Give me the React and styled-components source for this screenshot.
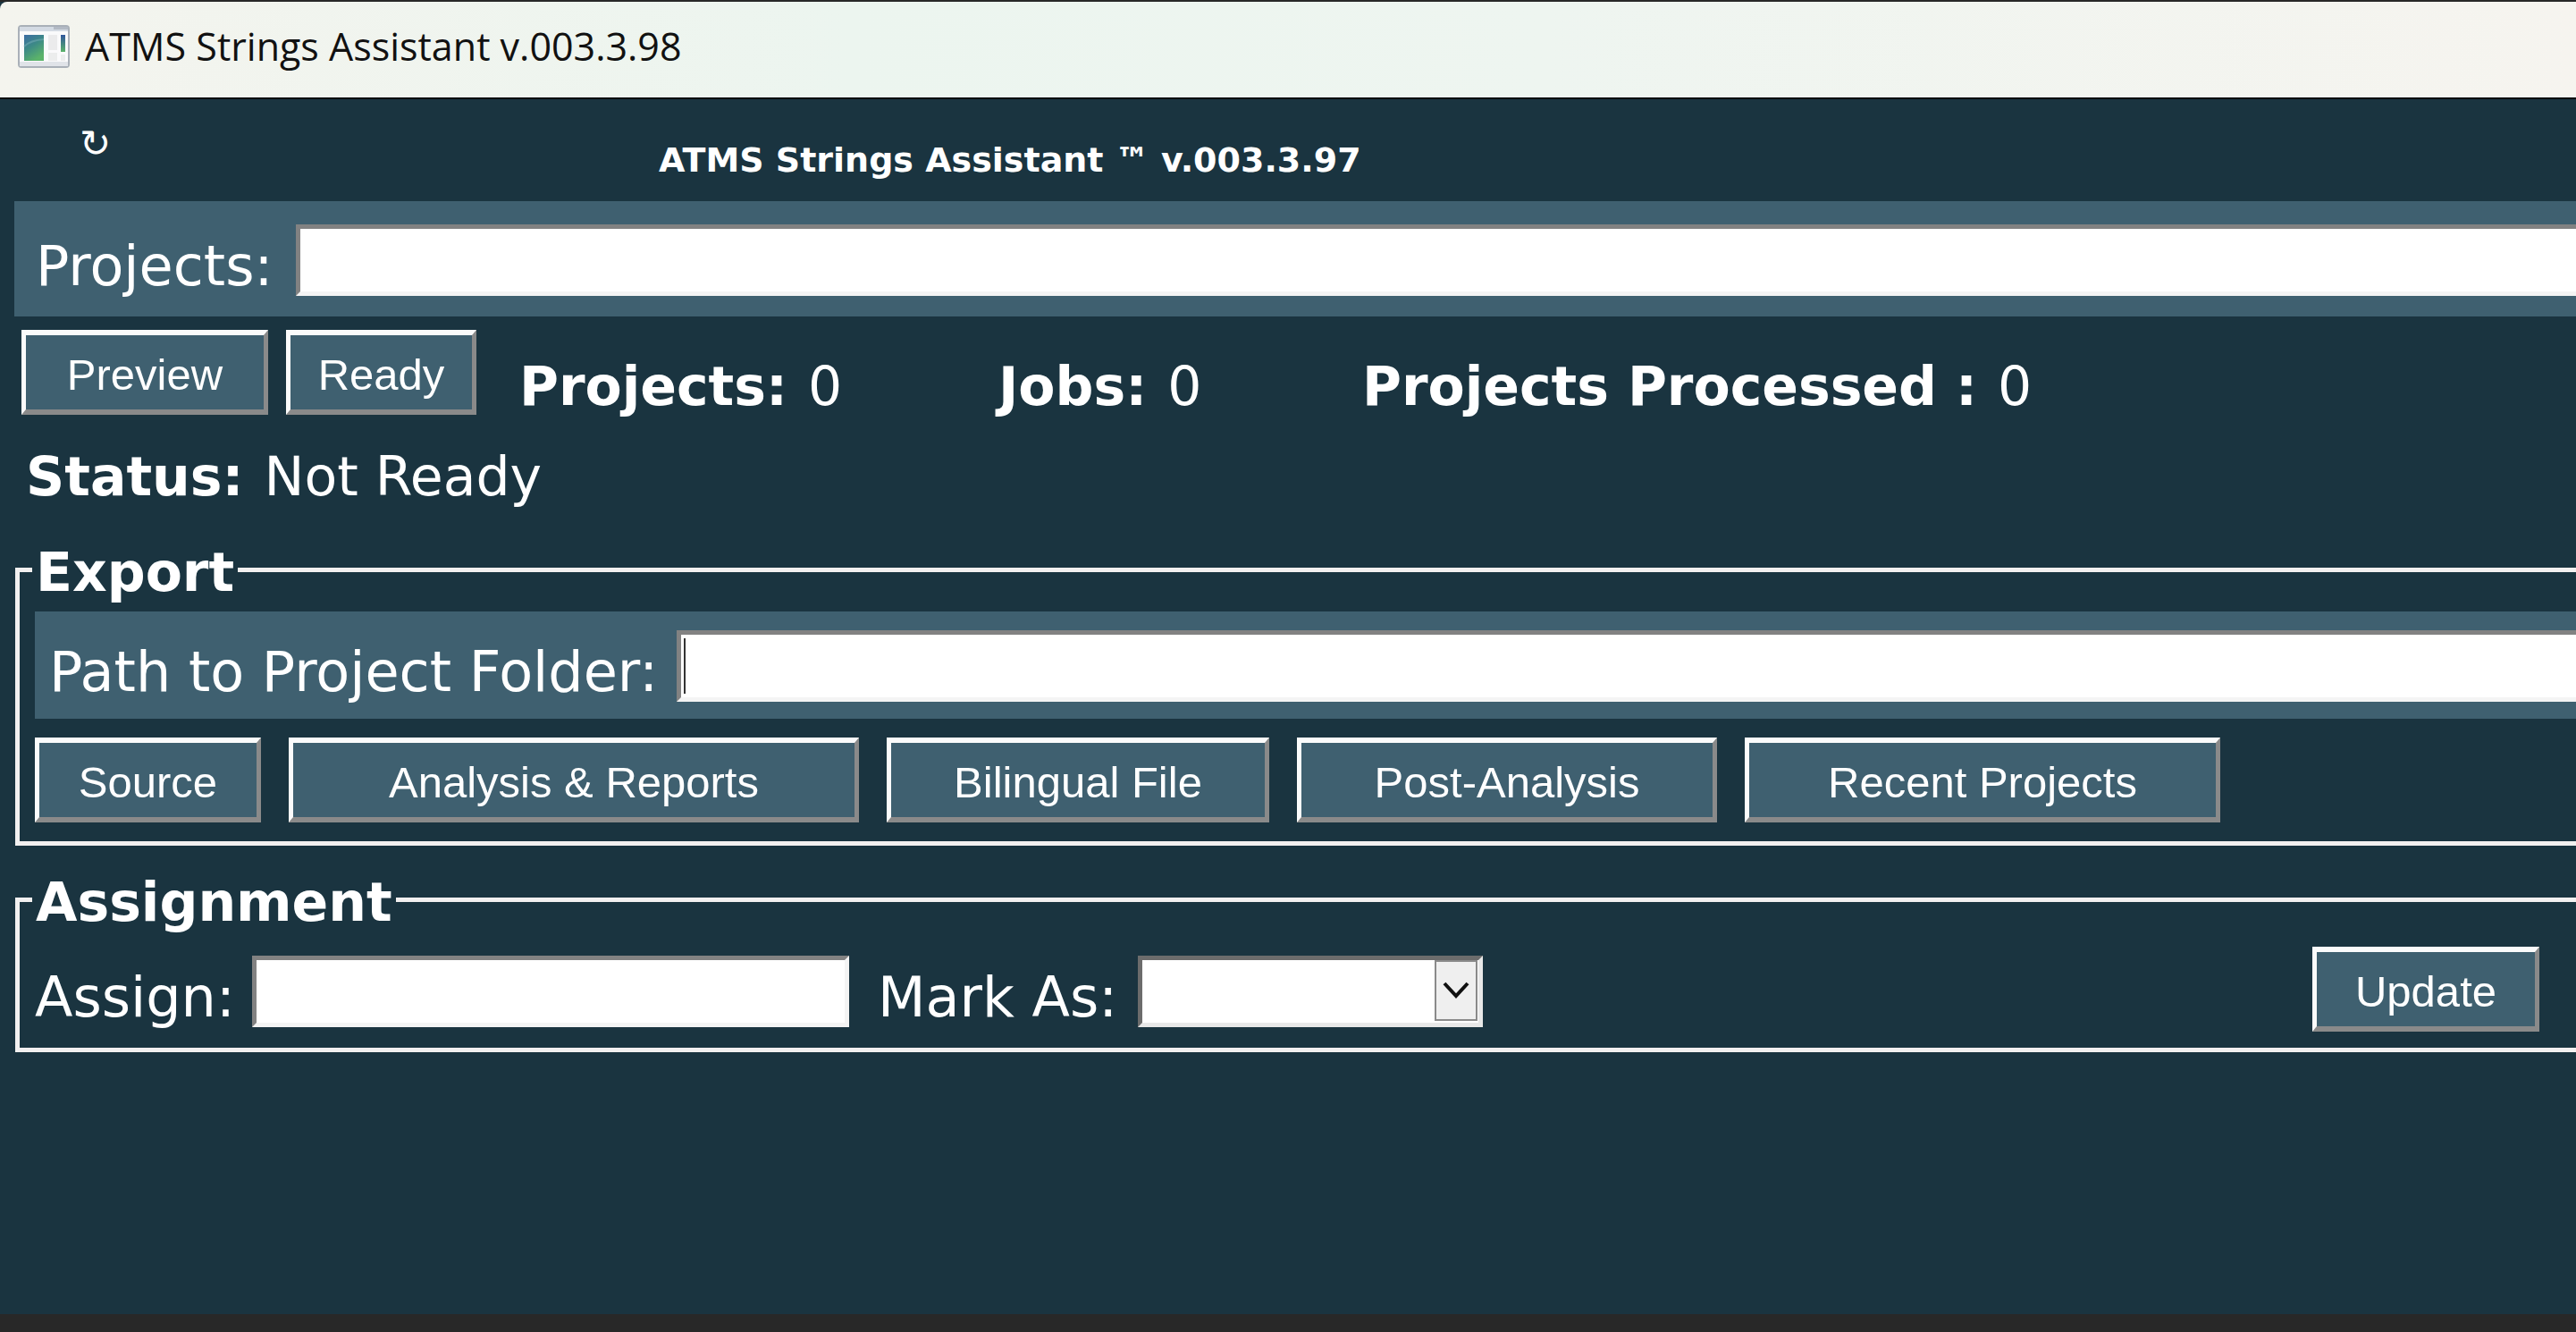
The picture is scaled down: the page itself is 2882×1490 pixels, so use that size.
import React from "react";
import styled, { createGlobalStyle } from "styled-components";

const ui = '"DejaVu Sans", Verdana, sans-serif';
const buttonFont = '"Liberation Sans", Arial, sans-serif';
const ink = "#1a3440";
const slate = "#3f6070";

const GlobalStyle = createGlobalStyle`
  *, *::before, *::after { box-sizing: border-box; }
  body { margin: 0; background: #282828; }
`;

const Window = styled.div`
  display: flex;
  flex-direction: column;
  min-height: 100vh;
  overflow: hidden;
  border-top: 2px solid #282828;
  border-bottom: 20px solid #282828;
  background: ${ink};
  color: #fff;
  font-family: ${ui};
  font-size: 60px;
`;

const TitleBar = styled.header`
  display: flex;
  align-items: center;
  gap: 17px;
  height: 109px;
  padding: 0 20px 8px;
  border-bottom: 2px solid #05080c;
  border-top-left-radius: 8px;
  background: linear-gradient(90deg, #f4f4ee 0%, #ecf5ef 33%, #eef5f0 60%, #f6f4ef 100%);
  color: #111;
  font-family: "Open Sans", "Noto Sans", sans-serif;
  font-size: 43px;
  line-height: 60px;
`;

const Main = styled.main`
  display: flex;
  flex-direction: column;
  padding-left: 16px;
`;

const Banner = styled.div`
  display: flex;
  align-items: flex-start;
  height: 114px;
`;

const RefreshButton = styled.button`
  width: 181px;
  margin-top: 26px;
  padding: 0;
  border: 0;
  background: none;
  color: #fff;
  font-family: ${ui};
  font-size: 42px;
  line-height: 48px;
`;

const Heading = styled.h1`
  margin: 0;
  padding: 44px 0 0 540px;
  font-size: 38px;
  line-height: 48px;
  white-space: nowrap;
`;

const Panel = styled.div`
  display: flex;
  align-items: flex-start;
  height: ${(p) => p.$height}px;
  padding-top: ${(p) => p.$pad}px;
  background: ${slate};
`;

const Label = styled.label`
  width: ${(p) => p.$width}px;
  padding-left: ${(p) => p.$inset || 0}px;
  font-size: 62px;
  line-height: 94px;
  white-space: nowrap;
`;

const TextBox = styled.input`
  flex: ${(p) => (p.$width ? "none" : "1")};
  width: ${(p) => (p.$width ? p.$width + "px" : "auto")};
  min-width: 0;
  height: 80px;
  padding: 0 8px;
  border: 5px solid;
  border-color: #828282 #f4f4f4 #f4f4f4 #828282;
  border-right-width: ${(p) => (p.$width ? 5 : 0)}px;
  outline: 0;
  background: ${(p) =>
    p.$caret ? "linear-gradient(#333, #333) 3px 4px / 2px 62px no-repeat #fff" : "#fff"};
  caret-color: ${(p) => (p.$caret ? "transparent" : "auto")};
  color: #111;
  font: 50px ${ui};
`;

const SelectWrap = styled.div`
  position: relative;
  width: 386px;
  height: 80px;
`;

const Select = styled.select`
  appearance: none;
  width: 100%;
  height: 100%;
  border: 5px solid;
  border-color: #6c6c6c #e8e8e8 #e8e8e8 #6c6c6c;
  border-radius: 0;
  background: #fff;
  font: 50px ${ui};
`;

const Arrow = styled.span`
  position: absolute;
  top: 5px;
  right: 6px;
  bottom: 7px;
  width: 48px;
  display: flex;
  align-items: center;
  justify-content: center;
  border: 2px solid #8a8a8a;
  background: #efefef;
  pointer-events: none;
`;

const Button = styled.button`
  flex: none;
  width: ${(p) => p.$width}px;
  height: 95px;
  padding: 4px 0 0;
  border: 6px solid;
  border-color: #fbfbfb #8a8a8a #8a8a8a #fbfbfb;
  border-left-width: 5px;
  border-right-width: 5px;
  background: ${slate};
  color: #fff;
  font-family: ${buttonFont};
  font-size: 49px;
  line-height: 60px;
  white-space: nowrap;
`;

const Row = styled.div`
  display: flex;
  align-items: flex-start;
  gap: ${(p) => p.$gap || 0}px;
  padding: ${(p) => p.$padding || 0};
`;

const Stat = styled.div`
  width: ${(p) => p.$width}px;
  padding-top: 27px;
  line-height: 72px;
  white-space: nowrap;
`;

const Status = styled.p`
  margin: 29px 0 32px;
  padding-left: 13px;
  line-height: 72px;
`;

const Value = styled.span`
  padding-left: 4px;
`;

const Group = styled.fieldset`
  min-width: 0;
  margin: 0 0 24px 1px;
  padding: ${(p) => p.$padding};
  border: 5px solid #f2f0f0;
  border-right: 0;
`;

const Legend = styled.legend`
  margin-left: -3px;
  padding: 6px 4px 0;
  font-weight: 700;
  line-height: 66px;
`;

const Fields = styled.div`
  display: flex;
  flex: 1;
  align-items: flex-start;
  padding-top: 10px;
`;

function AppIcon() {
  return (
    <svg width="58" height="48" viewBox="0 0 58 48" aria-hidden="true">
      <defs>
        <linearGradient id="pane" x1="0" y1="0" x2="0.5" y2="1">
          <stop offset="0" stopColor="#3b6ba3" />
          <stop offset="0.5" stopColor="#3d8a86" />
          <stop offset="1" stopColor="#5bb36a" />
        </linearGradient>
        <linearGradient id="bar" x1="0" y1="0" x2="0" y2="1">
          <stop offset="0" stopColor="#2f559b" />
          <stop offset="1" stopColor="#5bb36a" />
        </linearGradient>
      </defs>
      <rect x="1" y="1" width="56" height="46" rx="3" fill="#fafafb" stroke="#a9b0b8" strokeWidth="2" />
      <rect x="2" y="2" width="54" height="5" fill="#d3dae3" />
      <rect x="40" y="2" width="16" height="3" fill="#b3bac4" />
      <rect x="2" y="41" width="54" height="5" fill="#e0e3e8" />
      <rect x="7" y="11" width="22" height="29" fill="url(#pane)" />
      <path d="M7 24 Q14 17 29 16" stroke="#6fa9b0" strokeWidth="2" fill="none" opacity="0.6" />
      <rect x="34" y="11" width="10" height="17" fill="#ebebec" />
      <rect x="34" y="31" width="10" height="9" fill="#eceded" />
      <rect x="48" y="11" width="5" height="19" fill="url(#bar)" />
      <rect x="48" y="33" width="5" height="7" fill="#eceded" />
    </svg>
  );
}

export default function App() {
  return (
    <>
      <GlobalStyle />
      <Window>
        <TitleBar>
          <AppIcon />
          <span>ATMS Strings Assistant v.003.3.98</span>
        </TitleBar>
        <Main>
          <Banner>
            <RefreshButton type="button" aria-label="Refresh">↻</RefreshButton>
            <Heading>ATMS Strings Assistant ™ v.003.3.97</Heading>
          </Banner>

          <Panel $height={129} $pad={26}>
            <Label htmlFor="projects" $inset={24} $width={315}>Projects:</Label>
            <TextBox id="projects" type="text" />
          </Panel>

          <Row $padding="15px 0 0 8px">
            <Row $gap={20}>
              <Button type="button" $width={276}>Preview</Button>
              <Button type="button" $width={213}>Ready</Button>
            </Row>
            <Row $padding="0 0 0 48px">
              <Stat $width={536}><b>Projects:</b><Value> 0</Value></Stat>
              <Stat $width={407}><b>Jobs:</b><Value> 0</Value></Stat>
              <Stat><b>Projects Processed :</b><Value> 0</Value></Stat>
            </Row>
          </Row>

          <Status><b>Status:</b><Value> Not Ready</Value></Status>

          <Group $padding="11px 0 21px 17px">
            <Legend>Export</Legend>
            <Panel $height={120} $pad={21}>
              <Label htmlFor="path" $inset={16} $width={718}>Path to Project Folder:</Label>
              <TextBox id="path" type="text" $caret />
            </Panel>
            <Row $gap={31} $padding="21px 0 0">
              <Button type="button" $width={253}>Source</Button>
              <Button type="button" $width={638}>Analysis &amp; Reports</Button>
              <Button type="button" $width={428}>Bilingual File</Button>
              <Button type="button" $width={470}>Post-Analysis</Button>
              <Button type="button" $width={532}>Recent Projects</Button>
            </Row>
          </Group>

          <Group $padding="17px 41px 9px 17px">
            <Legend>Assignment</Legend>
            <Row>
              <Fields>
                <Label htmlFor="assign" $width={243}>Assign:</Label>
                <TextBox id="assign" type="text" $width={668} />
                <Label htmlFor="mark" $inset={32} $width={323}>Mark As:</Label>
                <SelectWrap>
                  <Select id="mark" defaultValue="">
                    <option value=""></option>
                  </Select>
                  <Arrow>
                    <svg width="30" height="20" viewBox="0 0 30 20" fill="none" stroke="#111" strokeWidth="4">
                      <path d="M2 2 L15 16 L28 2" />
                    </svg>
                  </Arrow>
                </SelectWrap>
              </Fields>
              <Button type="button" $width={254}>Update</Button>
            </Row>
          </Group>
        </Main>
      </Window>
    </>
  );
}
